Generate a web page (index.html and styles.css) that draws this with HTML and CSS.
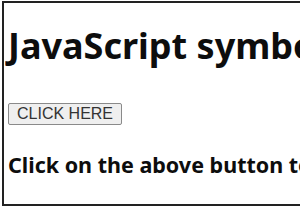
FILE: index.html
```html
<!DOCTYPE html>
<html lang="en">
<head>
  <meta charset="UTF-8">
  <title>JavaScript symbols</title>
  <link rel="stylesheet" href="styles.css">
</head>
<body>
<div class="frame">
  <h1>JavaScript symbols</h1>
  <button class="btn">CLICK HERE</button>
  <h3>Click on the above button to display the symbol</h3>
</div>
</body>
</html>
```

FILE: styles.css
```css
body {
  margin: 0;
  background-color: #fff;
  overflow: hidden;
}
.frame {
  margin: 1px 0 0 2px;
  width: 400px;
  height: 201px;
  border: 2px solid #222;
  border-right: none;
  font-family: "Noto Sans", sans-serif;
  color: #0d0d0d;
  overflow: hidden;
  white-space: nowrap;
}
h1 {
  font-size: 36px;
  font-weight: bold;
  line-height: 48px;
  margin: 19px 0 33px 4px;
}
.btn {
  display: block;
  margin-left: 4px;
  font-family: "Liberation Sans", Arial, sans-serif;
  font-size: 16px;
  line-height: 18px;
  color: #333;
  background-color: #efefef;
  border: 1px solid #8a8a8a;
  border-radius: 2px;
  padding: 1px 8px;
}
h3 {
  font-size: 21.5px;
  font-weight: bold;
  line-height: 28px;
  margin: 26px 0 0 4px;
}
```
